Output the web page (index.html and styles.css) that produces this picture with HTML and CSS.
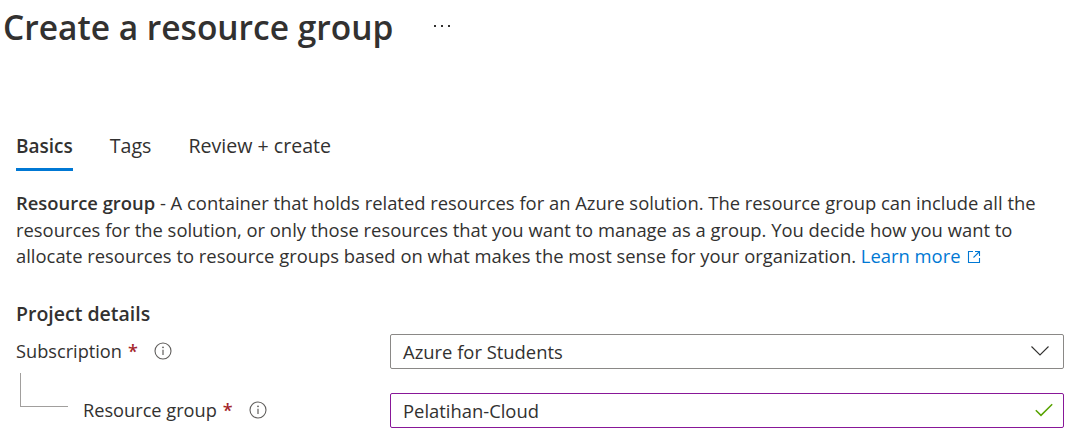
FILE: index.html
```html
<!DOCTYPE html>
<html lang="en">
<head>
<meta charset="utf-8">
<title>Create a resource group</title>
<link rel="stylesheet" href="styles.css">
</head>
<body>
<div class="page">
  <header class="title-bar">
    <h1 class="title">Create a resource group</h1>
    <span class="more" aria-label="More"><i></i><i></i><i></i></span>
  </header>

  <nav class="tabs">
    <a class="tab active">Basics</a>
    <a class="tab">Tags</a>
    <a class="tab">Review + create</a>
  </nav>

  <p class="intro"><strong>Resource group</strong> - A container that holds related resources for an Azure solution. The resource group can include all the<br>resources for the solution, or only those resources that you want to manage as a group. You decide how you want to<br>allocate resources to resource groups based on what makes the most sense for your organization. <a class="link">Learn more <svg class="ext" width="14" height="14" viewBox="0 0 14 14"><path d="M6 1.5H1.5v11h11V8" fill="none" stroke="currentColor" stroke-width="1.1"/><path d="M8 1.5h4.5V6M12.5 1.5L6.5 7.5" fill="none" stroke="currentColor" stroke-width="1.1"/></svg></a></p>

  <h2 class="section">Project details</h2>

  <div class="field">
    <div class="label-col">
      <span class="label">Subscription</span><span class="req">*</span>
      <svg class="info" width="18" height="18" viewBox="0 0 18 18"><circle cx="9" cy="9" r="8" fill="none" stroke="currentColor" stroke-width="1.1"/><circle cx="9" cy="5.3" r="0.9" fill="currentColor"/><path d="M9 7.8v5.2" stroke="currentColor" stroke-width="1.2"/></svg>
    </div>
    <div class="control select">
      <span>Azure for Students</span>
      <svg class="chev" width="18" height="10" viewBox="0 0 18 10"><path d="M0.5 0.5L9 9 17.5 0.5" fill="none" stroke="currentColor" stroke-width="1.1"/></svg>
    </div>
  </div>

  <div class="field nested">
    <div class="label-col">
      <span class="tree"></span>
      <span class="label">Resource group</span><span class="req">*</span>
      <svg class="info" width="18" height="18" viewBox="0 0 18 18"><circle cx="9" cy="9" r="8" fill="none" stroke="currentColor" stroke-width="1.1"/><circle cx="9" cy="5.3" r="0.9" fill="currentColor"/><path d="M9 7.8v5.2" stroke="currentColor" stroke-width="1.2"/></svg>
    </div>
    <div class="control input valid">
      <span>Pelatihan-Cloud</span>
      <svg class="check" width="18" height="14" viewBox="0 0 18 14"><path d="M0.8 7.2L6 12.4 17.2 1.2" fill="none" stroke="currentColor" stroke-width="1.5"/></svg>
    </div>
  </div>
</div>
</body>
</html>
```

FILE: styles.css
```css
* { box-sizing: border-box; }
html, body { margin: 0; padding: 0; background: #ffffff; }
body {
  font-family: "Open Sans", "Noto Sans", sans-serif;
  color: #323130;
  font-size: 18.3px;
}
.page { padding: 0 10px 0 16px; }

.title-bar {
  display: flex;
  align-items: center;
  margin-left: -13px;
  height: 54px;
}
.title {
  margin: 0;
  font-size: 33.5px;
  font-weight: 600;
  line-height: 40px;
}
.more {
  display: flex;
  gap: 5px;
  margin-left: 41px;
  margin-top: -2px;
}
.more i {
  display: block;
  width: 2px;
  height: 2px;
  background: #323130;
}

.tabs {
  display: flex;
  gap: 37px;
  margin-top: 79px;
}
.tab {
  display: block;
  font-size: 19.6px;
  line-height: 26px;
  padding-bottom: 9px;
  border-bottom: 3px solid transparent;
}
.tab.active {
  font-weight: 600;
  font-size: 19px;
  border-bottom-color: #0078d4;
}

.intro {
  margin: 19px 0 0;
  font-size: 18.4px;
  line-height: 26.6px;
  white-space: nowrap;
}
.intro strong { font-weight: 600; }
.link { color: #0078d4; }
.ext { vertical-align: -1px; margin-left: 2px; }

.section {
  margin: 31px 0 0;
  font-size: 19.5px;
  font-weight: 600;
  line-height: 26px;
}

.field {
  display: flex;
  align-items: center;
  margin-top: 7px;
}
.field.nested { margin-top: 24px; }
.label-col {
  width: 374px;
  display: flex;
  align-items: center;
  flex: none;
  align-self: stretch;
}
.label { font-size: 18.2px; }
.req {
  color: #a4262c;
  font-weight: 600;
  margin-left: 6px;
  font-size: 18px;
}
.info { color: #605e5c; margin-left: 16px; }

.tree {
  align-self: flex-start;
  width: 48px;
  height: 34px;
  margin: -20px 15px 0 4px;
  border-left: 1px solid #a19f9d;
  border-bottom: 1px solid #a19f9d;
}

.control {
  flex: 1;
  height: 35px;
  display: flex;
  align-items: center;
  justify-content: space-between;
  padding: 0 13px 0 12px;
  border: 1px solid #8a8886;
  border-radius: 2px;
  font-size: 18.4px;
}
.control.valid { border-color: #881798; }
.chev { color: #323130; margin-right: 1px; }
.check { color: #57a300; margin-right: -3px; }
```
